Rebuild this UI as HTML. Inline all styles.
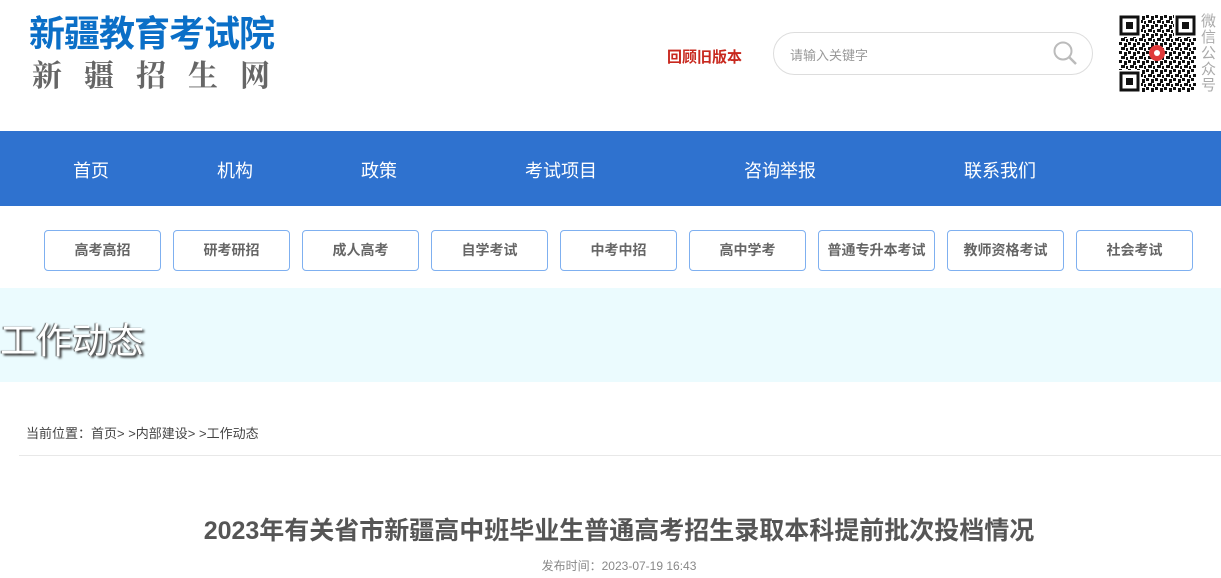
<!DOCTYPE html>
<html><head><meta charset="utf-8"><style>
*{margin:0;padding:0;box-sizing:border-box}
body{width:1221px;height:578px;overflow:hidden;background:#fff;font-family:"Liberation Sans","Noto Sans CJK SC",sans-serif;position:relative}
.abs{position:absolute}
.logo1{left:29px;top:12px;font-size:36px;color:#0b6fc7;font-weight:bold;letter-spacing:-1px;line-height:44px}
.logo2{left:32px;top:55px;font-size:30px;color:#666;font-family:"Noto Serif CJK SC",serif;font-weight:bold;letter-spacing:22px;line-height:36px}
.old{left:667px;top:46px;font-size:15px;color:#c8281e;font-weight:bold}
.search{left:773px;top:32px;width:320px;height:43px;border:1px solid #ddd;border-radius:22px}
.search span{position:absolute;left:16px;top:12px;font-size:13px;color:#999}
.nav{left:0;top:131px;width:1221px;height:75px;background:#2f72cf}
.nav span{position:absolute;top:26px;font-size:18px;color:#fff}
.btn{position:absolute;top:230px;width:117px;height:41px;border:1px solid #7fb0f0;border-radius:4px;font-size:14px;color:#666;font-weight:bold;text-align:center;line-height:39px}
.banner{left:0;top:288px;width:1221px;height:94px;background:#ebfbfe}
.banner span{position:absolute;left:0;top:24px;font-size:36px;color:#fff;text-shadow:2px 2px 2px #333,-1px 0 1px #555}
.crumb{left:26px;top:423px;font-size:13px;color:#444}
.line{left:19px;top:455px;width:1202px;height:1px;background:#e8e8e8}
.title{left:0;top:511px;width:1238px;text-align:center;font-size:25px;font-weight:bold;color:#555}
.date{left:0;top:557px;width:1238px;text-align:center;font-size:12px;color:#888}
</style></head><body>
<div class="abs logo1">新疆教育考试院</div>
<div class="abs logo2">新疆招生网</div>
<div class="abs old">回顾旧版本</div>
<div class="abs search"><span>请输入关键字</span>
<svg class="abs" style="left:278px;top:7px" width="28" height="28" viewBox="0 0 28 28"><circle cx="11" cy="11" r="8.5" fill="none" stroke="#bbb" stroke-width="2"/><path d="M17 17l7 7" stroke="#bbb" stroke-width="2.5"/></svg></div>
<svg class="abs" style="left:1119px;top:15px" width="77" height="77" viewBox="0 0 77 77">
<defs><pattern id="p" width="9" height="9" patternUnits="userSpaceOnUse"><rect width="9" height="9" fill="#fff"/><rect x="0" y="0" width="3" height="3" fill="#111"/><rect x="5" y="1" width="3" height="4" fill="#111"/><rect x="2" y="5" width="4" height="3" fill="#111"/><rect x="7" y="6" width="2" height="3" fill="#111"/></pattern></defs>
<rect width="77" height="77" fill="url(#p)"/>
<g fill="#fff"><rect x="0" y="0" width="22" height="22"/><rect x="55" y="0" width="22" height="22"/><rect x="0" y="55" width="22" height="22"/></g>
<g fill="none" stroke="#111" stroke-width="3"><rect x="2" y="2" width="17" height="17"/><rect x="58" y="2" width="17" height="17"/><rect x="2" y="58" width="17" height="17"/></g>
<g fill="#111"><rect x="7" y="7" width="7" height="7"/><rect x="63" y="7" width="7" height="7"/><rect x="7" y="63" width="7" height="7"/></g>
<circle cx="38" cy="38" r="8" fill="#e03a3a"/><circle cx="38" cy="38" r="3" fill="#fff"/></svg>
<div class="abs" style="left:1201px;top:14px;width:17px;font-size:15px;line-height:16px;color:#aaa">微信公众号</div>
<div class="abs nav"><span style="left:73px">首页</span><span style="left:217px">机构</span><span style="left:361px">政策</span><span style="left:525px">考试项目</span><span style="left:744px">咨询举报</span><span style="left:964px">联系我们</span></div>
<div class="btn" style="left:44px">高考高招</div>
<div class="btn" style="left:173px">研考研招</div>
<div class="btn" style="left:302px">成人高考</div>
<div class="btn" style="left:431px">自学考试</div>
<div class="btn" style="left:560px">中考中招</div>
<div class="btn" style="left:689px">高中学考</div>
<div class="btn" style="left:818px">普通专升本考试</div>
<div class="btn" style="left:947px">教师资格考试</div>
<div class="btn" style="left:1076px">社会考试</div>
<div class="abs banner"><span>工作动态</span></div>
<div class="abs crumb">当前位置：首页&gt; &gt;内部建设&gt; &gt;工作动态</div>
<div class="abs line"></div>
<div class="abs title">2023年有关省市新疆高中班毕业生普通高考招生录取本科提前批次投档情况</div>
<div class="abs date">发布时间：2023-07-19 16:43</div>
</body></html>
